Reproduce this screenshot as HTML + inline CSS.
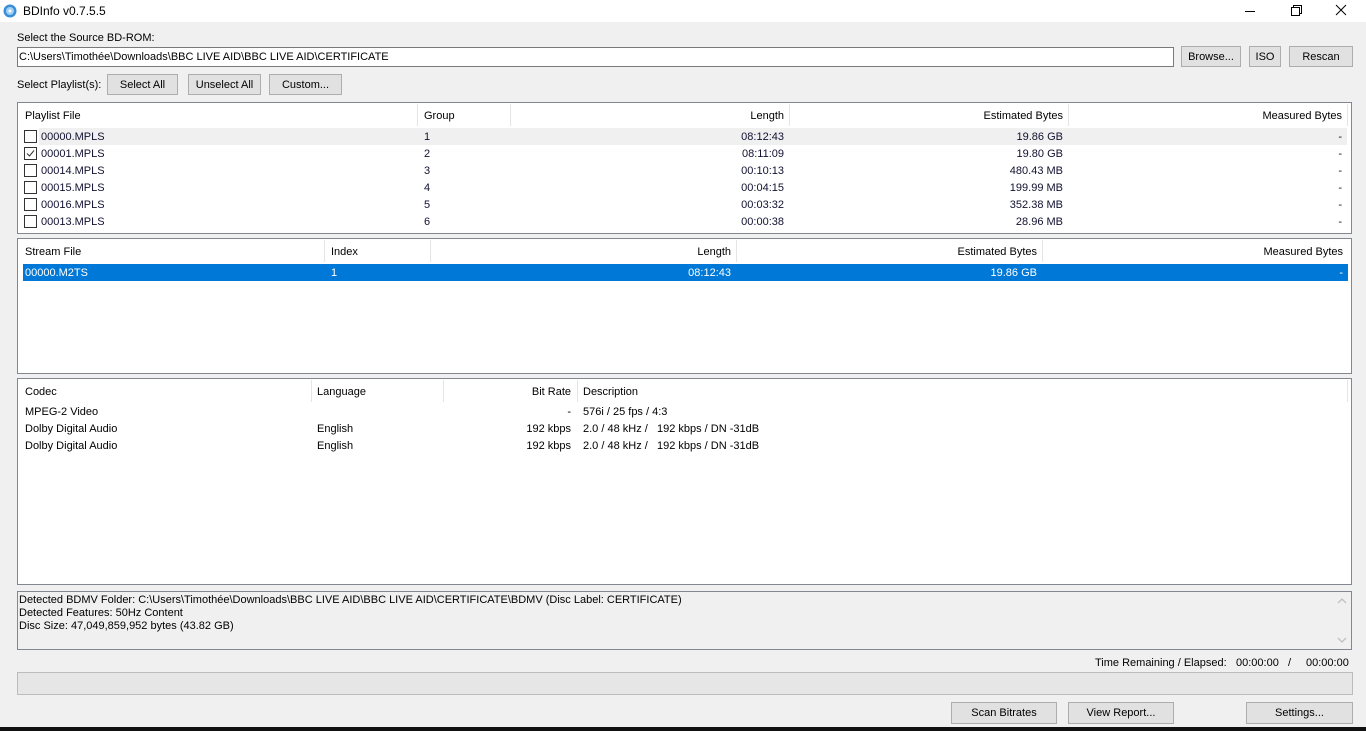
<!DOCTYPE html>
<html><head><meta charset="utf-8"><style>
*{margin:0;padding:0;box-sizing:border-box}
body{width:1366px;height:731px;background:#f0f0f0;font-family:"Liberation Sans",sans-serif;font-size:11px;color:#000;position:relative;overflow:hidden}
.a{position:absolute;white-space:nowrap}
.btn{position:absolute;background:#e1e1e1;border:1px solid #adadad;text-align:center;line-height:20px}
.box{position:absolute;background:#fff;border:1px solid #828790}
.t{position:absolute;white-space:nowrap;line-height:15px}
.r{text-align:right}
.div{position:absolute;width:1px;background:#e5e5e5}
.cb{position:absolute;width:13px;height:13px;border:1px solid #333;background:#fff}
</style></head><body>
<div class="a" style="left:0;top:0;width:1366px;height:22px;background:#fff"></div>
<svg class="a" style="left:3px;top:4px" width="14" height="14"><circle cx="7" cy="7" r="6.5" fill="#3b8fd6"/><circle cx="7" cy="7" r="4" fill="#9fd0f5"/><circle cx="7" cy="7" r="1.5" fill="#fff"/></svg>
<div class="t" style="left:23px;top:4px;font-size:12px">BDInfo v0.7.5.5</div>
<svg class="a" style="left:1240px;top:4px" width="120" height="14"><line x1="5" y1="7.5" x2="15" y2="7.5" stroke="#000"/><rect x="51.5" y="3.5" width="8" height="8" fill="none" stroke="#000"/><path d="M53.5 3.5V1.5H61.5V9.5H59.5" fill="none" stroke="#000"/><path d="M96 1L106 11M106 1L96 11" stroke="#000"/></svg>

<div class="t" style="left:17px;top:31px">Select the Source BD-ROM:</div>
<div class="a" style="left:17px;top:47px;width:1157px;height:20px;background:#fff;border:1px solid #7a7a7a"></div>
<div class="t" style="left:19px;top:50px">C:\Users\Timothée\Downloads\BBC LIVE AID\BBC LIVE AID\CERTIFICATE</div>
<div class="btn" style="left:1181px;top:46px;width:60px;height:21px">Browse...</div>
<div class="btn" style="left:1249px;top:46px;width:32px;height:21px">ISO</div>
<div class="btn" style="left:1289px;top:46px;width:64px;height:21px">Rescan</div>

<div class="t" style="left:17px;top:78px">Select Playlist(s):</div>
<div class="btn" style="left:107px;top:74px;width:71px;height:21px">Select All</div>
<div class="btn" style="left:188px;top:74px;width:73px;height:21px">Unselect All</div>
<div class="btn" style="left:269px;top:74px;width:73px;height:21px">Custom...</div>

<!-- playlist -->
<div class="box" style="left:17px;top:102px;width:1335px;height:132px"></div>
<div class="div" style="left:417px;top:104px;height:22px"></div>
<div class="div" style="left:510px;top:104px;height:22px"></div>
<div class="div" style="left:789px;top:104px;height:22px"></div>
<div class="div" style="left:1068px;top:104px;height:22px"></div>
<div class="div" style="left:1347px;top:104px;height:22px"></div>
<div class="t" style="left:25px;top:109px">Playlist File</div>
<div class="t" style="left:424px;top:109px">Group</div>
<div class="t r" style="left:510px;top:109px;width:274px">Length</div>
<div class="t r" style="left:789px;top:109px;width:274px">Estimated Bytes</div>
<div class="t r" style="left:1068px;top:109px;width:274px">Measured Bytes</div>
<div class="a" style="left:39px;top:128px;width:1308px;height:17px;background:#f0f0f0"></div>
<div style="color:#101030">
<div class="cb" style="left:24px;top:130px"></div><div class="t" style="left:41px;top:130px">00000.MPLS</div><div class="t" style="left:424px;top:130px">1</div><div class="t r" style="left:510px;top:130px;width:274px">08:12:43</div><div class="t r" style="left:789px;top:130px;width:274px">19.86 GB</div><div class="t r" style="left:1068px;top:130px;width:274px">-</div>
<div class="cb" style="left:24px;top:147px"></div><svg class="a" style="left:25px;top:148px" width="11" height="11"><path d="M2 5.5L4.5 8L9 2.5" fill="none" stroke="#333"/></svg><div class="t" style="left:41px;top:147px">00001.MPLS</div><div class="t" style="left:424px;top:147px">2</div><div class="t r" style="left:510px;top:147px;width:274px">08:11:09</div><div class="t r" style="left:789px;top:147px;width:274px">19.80 GB</div><div class="t r" style="left:1068px;top:147px;width:274px">-</div>
<div class="cb" style="left:24px;top:164px"></div><div class="t" style="left:41px;top:164px">00014.MPLS</div><div class="t" style="left:424px;top:164px">3</div><div class="t r" style="left:510px;top:164px;width:274px">00:10:13</div><div class="t r" style="left:789px;top:164px;width:274px">480.43 MB</div><div class="t r" style="left:1068px;top:164px;width:274px">-</div>
<div class="cb" style="left:24px;top:181px"></div><div class="t" style="left:41px;top:181px">00015.MPLS</div><div class="t" style="left:424px;top:181px">4</div><div class="t r" style="left:510px;top:181px;width:274px">00:04:15</div><div class="t r" style="left:789px;top:181px;width:274px">199.99 MB</div><div class="t r" style="left:1068px;top:181px;width:274px">-</div>
<div class="cb" style="left:24px;top:198px"></div><div class="t" style="left:41px;top:198px">00016.MPLS</div><div class="t" style="left:424px;top:198px">5</div><div class="t r" style="left:510px;top:198px;width:274px">00:03:32</div><div class="t r" style="left:789px;top:198px;width:274px">352.38 MB</div><div class="t r" style="left:1068px;top:198px;width:274px">-</div>
<div class="cb" style="left:24px;top:215px"></div><div class="t" style="left:41px;top:215px">00013.MPLS</div><div class="t" style="left:424px;top:215px">6</div><div class="t r" style="left:510px;top:215px;width:274px">00:00:38</div><div class="t r" style="left:789px;top:215px;width:274px">28.96 MB</div><div class="t r" style="left:1068px;top:215px;width:274px">-</div>
</div>

<!-- stream -->
<div class="box" style="left:17px;top:238px;width:1335px;height:136px"></div>
<div class="div" style="left:324px;top:240px;height:22px"></div>
<div class="div" style="left:430px;top:240px;height:22px"></div>
<div class="div" style="left:736px;top:240px;height:22px"></div>
<div class="div" style="left:1042px;top:240px;height:22px"></div>
<div class="t" style="left:25px;top:245px">Stream File</div>
<div class="t" style="left:331px;top:245px">Index</div>
<div class="t r" style="left:430px;top:245px;width:301px">Length</div>
<div class="t r" style="left:736px;top:245px;width:301px">Estimated Bytes</div>
<div class="t r" style="left:1042px;top:245px;width:301px">Measured Bytes</div>
<div class="a" style="left:23px;top:264px;width:1325px;height:17px;background:#0078d7"></div>
<div style="color:#fff">
<div class="t" style="left:25px;top:266px">00000.M2TS</div><div class="t" style="left:331px;top:266px">1</div><div class="t r" style="left:430px;top:266px;width:301px">08:12:43</div><div class="t r" style="left:736px;top:266px;width:301px">19.86 GB</div><div class="t r" style="left:1042px;top:266px;width:301px">-</div>
</div>

<!-- codec -->
<div class="box" style="left:17px;top:378px;width:1335px;height:207px"></div>
<div class="div" style="left:311px;top:380px;height:22px"></div>
<div class="div" style="left:443px;top:380px;height:22px"></div>
<div class="div" style="left:577px;top:380px;height:22px"></div>
<div class="div" style="left:1347px;top:380px;height:22px"></div>
<div class="t" style="left:25px;top:385px">Codec</div>
<div class="t" style="left:317px;top:385px">Language</div>
<div class="t r" style="left:443px;top:385px;width:128px">Bit Rate</div>
<div class="t" style="left:583px;top:385px">Description</div>
<div class="t" style="left:25px;top:405px">MPEG-2 Video</div><div class="t r" style="left:443px;top:405px;width:128px">-</div><div class="t" style="left:583px;top:405px">576i / 25 fps / 4:3</div>
<div class="t" style="left:25px;top:422px">Dolby Digital Audio</div><div class="t" style="left:317px;top:422px">English</div><div class="t r" style="left:443px;top:422px;width:128px">192 kbps</div><div class="t" style="left:583px;top:422px">2.0 / 48 kHz /&nbsp;&nbsp; 192 kbps / DN -31dB</div>
<div class="t" style="left:25px;top:439px">Dolby Digital Audio</div><div class="t" style="left:317px;top:439px">English</div><div class="t r" style="left:443px;top:439px;width:128px">192 kbps</div><div class="t" style="left:583px;top:439px">2.0 / 48 kHz /&nbsp;&nbsp; 192 kbps / DN -31dB</div>

<!-- info -->
<div class="a" style="left:17px;top:591px;width:1335px;height:59px;border:1px solid #828790;background:#f0f0f0"></div>
<div class="t" style="left:19px;top:594px;line-height:13px">Detected BDMV Folder: C:\Users\Timothée\Downloads\BBC LIVE AID\BBC LIVE AID\CERTIFICATE\BDMV (Disc Label: CERTIFICATE)<br>Detected Features: 50Hz Content<br>Disc Size: 47,049,859,952 bytes (43.82 GB)</div>
<svg class="a" style="left:1335px;top:594px" width="14" height="54"><path d="M3 9L7 5L11 9" fill="none" stroke="#c0c0c0" stroke-width="1.3"/><path d="M3 44L7 48L11 44" fill="none" stroke="#c0c0c0" stroke-width="1.3"/></svg>

<div class="t" style="left:1095px;top:656px">Time Remaining / Elapsed:</div>
<div class="t" style="left:1236px;top:656px">00:00:00</div>
<div class="t" style="left:1288px;top:656px">/</div>
<div class="t" style="left:1306px;top:656px">00:00:00</div>
<div class="a" style="left:17px;top:672px;width:1336px;height:23px;background:#e6e6e6;border:1px solid #bcbcbc"></div>

<div class="btn" style="left:951px;top:702px;width:106px;height:22px;line-height:21px">Scan Bitrates</div>
<div class="btn" style="left:1068px;top:702px;width:106px;height:22px;line-height:21px">View Report...</div>
<div class="btn" style="left:1246px;top:702px;width:107px;height:22px;line-height:21px">Settings...</div>
<div class="a" style="left:0;top:727px;width:1366px;height:4px;background:#111"></div>
</body></html>
